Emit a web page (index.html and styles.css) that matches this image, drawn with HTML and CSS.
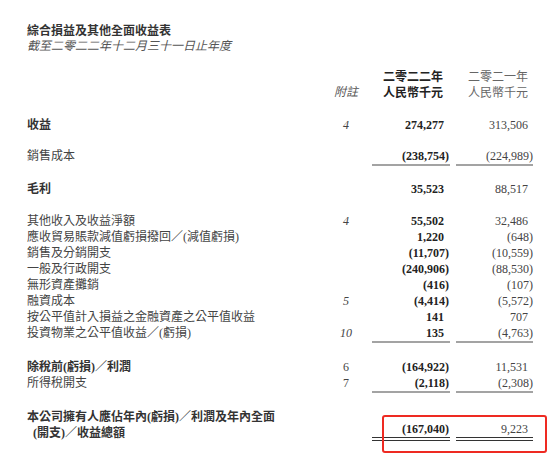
FILE: index.html
```html
<!DOCTYPE html>
<html lang="zh-Hant">
<head>
<meta charset="utf-8">
<link rel="stylesheet" href="styles.css">
</head>
<body>
<div class="page">
  <div class="title">綜合損益及其他全面收益表</div>
  <div class="subtitle">截至二零二二年十二月三十一日止年度</div>

  <div class="sheet">
    <div class="row head first">
      <div class="label"></div>
      <div class="note"></div>
      <div class="c22 h">二零二二年</div>
      <div class="c21 h">二零二一年</div>
    </div>
    <div class="row head">
      <div class="label"></div>
      <div class="note it">附註</div>
      <div class="c22 h">人民幣千元</div>
      <div class="c21 h">人民幣千元</div>
    </div>

    <div class="row gap17">
      <div class="label b">收益</div>
      <div class="note it">4</div>
      <div class="c22 pos">274,277</div>
      <div class="c21 pos">313,506</div>
    </div>

    <div class="row gap15 ul">
      <div class="label">銷售成本</div>
      <div class="note"></div>
      <div class="c22 neg">(238,754)</div>
      <div class="c21 neg">(224,989)</div>
    </div>

    <div class="row gap15">
      <div class="label b">毛利</div>
      <div class="note"></div>
      <div class="c22 pos">35,523</div>
      <div class="c21 pos">88,517</div>
    </div>

    <div class="row gap16">
      <div class="label">其他收入及收益淨額</div>
      <div class="note it">4</div>
      <div class="c22 pos">55,502</div>
      <div class="c21 pos">32,486</div>
    </div>
    <div class="row">
      <div class="label">應收貿易賬款減值虧損撥回／(減值虧損)</div>
      <div class="note"></div>
      <div class="c22 pos">1,220</div>
      <div class="c21 neg">(648)</div>
    </div>
    <div class="row">
      <div class="label">銷售及分銷開支</div>
      <div class="note"></div>
      <div class="c22 neg">(11,707)</div>
      <div class="c21 neg">(10,559)</div>
    </div>
    <div class="row">
      <div class="label">一般及行政開支</div>
      <div class="note"></div>
      <div class="c22 neg">(240,906)</div>
      <div class="c21 neg">(88,530)</div>
    </div>
    <div class="row">
      <div class="label">無形資產攤銷</div>
      <div class="note"></div>
      <div class="c22 neg">(416)</div>
      <div class="c21 neg">(107)</div>
    </div>
    <div class="row">
      <div class="label">融資成本</div>
      <div class="note it">5</div>
      <div class="c22 neg">(4,414)</div>
      <div class="c21 neg">(5,572)</div>
    </div>
    <div class="row">
      <div class="label">按公平值計入損益之金融資產之公平值收益</div>
      <div class="note"></div>
      <div class="c22 pos">141</div>
      <div class="c21 pos">707</div>
    </div>
    <div class="row ul">
      <div class="label">投資物業之公平值收益／(虧損)</div>
      <div class="note it">10</div>
      <div class="c22 pos">135</div>
      <div class="c21 neg">(4,763)</div>
    </div>

    <div class="row gap16">
      <div class="label b">除稅前(虧損)／利潤</div>
      <div class="note">6</div>
      <div class="c22 neg">(164,922)</div>
      <div class="c21 pos">11,531</div>
    </div>
    <div class="row ul">
      <div class="label">所得稅開支</div>
      <div class="note">7</div>
      <div class="c22 neg">(2,118)</div>
      <div class="c21 neg">(2,308)</div>
    </div>

    <div class="row gap16 dbl total">
      <div class="label b">本公司擁有人應佔年內(虧損)／利潤及年內全面<br><span class="indent">(開支)／收益總額</span></div>
      <div class="note"></div>
      <div class="c22 neg">(167,040)</div>
      <div class="c21 pos">9,223</div>
    </div>
  </div>

  <div class="highlight"></div>
</div>
</body>
</html>
```

FILE: styles.css
```css
html, body {
  margin: 0;
  padding: 0;
  background: #ffffff;
}

body {
  font-family: "Liberation Serif", "Noto Sans CJK TC", serif;
  font-size: 12px;
  color: #444444;
}

.page {
  position: relative;
  width: 550px;
  height: 457px;
  padding: 22px 0 0 27px;
  box-sizing: border-box;
}

.title {
  font-family: "Noto Sans CJK TC", sans-serif;
  font-weight: 700;
  font-size: 12px;
  line-height: 16px;
  color: #333333;
}

.subtitle {
  font-family: "Liberation Serif", "Noto Sans CJK TC", serif;
  font-style: italic;
  font-size: 12px;
  line-height: 16px;
  color: #555555;
}

.sheet {
  width: 506px;
  margin-top: 14px;
}

.row {
  display: grid;
  grid-template-columns: 1fr 40px 78px 77px;
  column-gap: 6px;
  line-height: 16px;
}

.gap15 { margin-top: 15px; }
.gap16 { margin-top: 16px; }
.gap17 { margin-top: 17px; }

.label {
  white-space: nowrap;
  color: #444444;
}

.label.b {
  font-family: "Liberation Serif", "Noto Sans CJK TC", sans-serif;
  font-weight: 700;
  color: #333333;
}

.indent {
  padding-left: 6px;
}

.note {
  text-align: center;
  color: #444444;
}

.it {
  font-style: italic;
}

.c22, .c21 {
  text-align: right;
  white-space: nowrap;
  align-self: end;
}

.c22 {
  font-weight: 700;
  color: #222222;
}

.c21 {
  color: #444444;
}

.c22.pos { padding-right: 6px; }
.c22.neg { padding-right: 1px; }
.c21.pos { padding-right: 5px; }
.c21.neg { padding-right: 0; }

.head .h {
  font-family: "Noto Sans CJK TC", sans-serif;
}

.head .c22.h {
  padding-right: 7px;
  color: #222222;
}

.head .c21.h {
  padding-right: 5px;
  font-weight: 400;
  color: #666666;
}

.head .note {
  font-family: "Liberation Serif", "Noto Sans CJK TC", serif;
  color: #555555;
}

.ul .c22, .ul .c21 {
  border-bottom: 2px solid #a3a3a3;
}

.dbl .c22, .dbl .c21 {
  border-bottom: 4px double #333333;
}

.highlight {
  position: absolute;
  left: 382px;
  top: 415px;
  width: 165px;
  height: 38px;
  box-sizing: border-box;
  border: 2px solid #ee2a22;
  border-radius: 3px;
}
```
